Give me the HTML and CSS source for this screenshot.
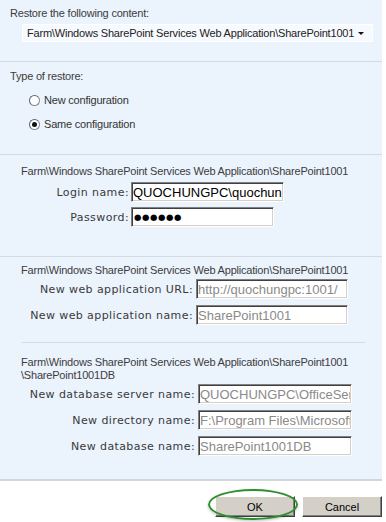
FILE: index.html
```html
<!DOCTYPE html>
<html lang="en">
<head>
  <meta charset="UTF-8" />
  <title>Restore Options</title>
  <link rel="stylesheet" href="styles.css">
</head>
<body>

  <main class="panel">
    <section class="block block-content">
      <div class="caption">Restore the following content:</div>
      <div class="select">
        <span>Farm\Windows SharePoint Services Web Application\SharePoint1001</span>
        <span class="arrow"></span>
      </div>
    </section>

    <section class="block block-type">
      <div class="caption">Type of restore:</div>
      <label class="radio"><span class="circle"></span>New configuration</label>
      <label class="radio"><span class="circle checked"></span>Same configuration</label>
    </section>

    <section class="block block-login">
      <div class="path">Farm\Windows SharePoint Services Web Application\SharePoint1001</div>
      <div class="fields fields-login">
        <span class="label">Login name:</span>
        <input class="box box-login" type="text" value="QUOCHUNGPC\quochung" />
        <span class="label">Password:</span>
        <div class="box box-pass">●●●●●●</div>
      </div>
    </section>

    <section class="block block-web">
      <div class="path">Farm\Windows SharePoint Services Web Application\SharePoint1001</div>
      <div class="fields fields-web">
        <span class="label">New web application URL:</span>
        <input class="box" type="text" value="http://quochungpc:1001/" disabled />
        <span class="label">New web application name:</span>
        <input class="box" type="text" value="SharePoint1001" disabled />
      </div>
    </section>

    <section class="block block-db">
      <div class="path">Farm\Windows SharePoint Services Web Application\SharePoint1001<br>\SharePoint1001DB</div>
      <div class="fields fields-db">
        <span class="label">New database server name:</span>
        <input class="box" type="text" value="QUOCHUNGPC\OfficeServers" disabled />
        <span class="label">New directory name:</span>
        <input class="box" type="text" value="F:\Program Files\Microsoft Office Servers" disabled />
        <span class="label">New database name:</span>
        <input class="box" type="text" value="SharePoint1001DB" disabled />
      </div>
    </section>
  </main>

  <div class="actions">
    <div class="ok-wrap">
      <button class="btn">OK</button>
      <span class="ring"></span>
    </div>
    <button class="btn">Cancel</button>
  </div>

</body>
</html>
```

FILE: styles.css
```css
:root {
  --fondo: #ebf3fd;
  --linea: #d6dbe2;
  --texto: #3c3c3c;
}

* {
  box-sizing: border-box;
}

body {
  margin: 0;
  background: #fff;
  font-family: 'Liberation Sans', Arial, sans-serif;
  font-size: 11px;
  letter-spacing: -0.2px;
  color: var(--texto);
  width: 386px;
  height: 522px;
  overflow: hidden;
}

.panel {
  width: 382px;
  height: 481px;
  background: var(--fondo);
  border-bottom: 2px solid #d3d6db;
}

.block {
  border-bottom: 1px solid var(--linea);
}

.caption {
  padding-left: 10px;
}

/* Restore the following content */
.block-content {
  height: 62px;
  padding-top: 7px;
}

.select {
  margin: 5px 0 0 22px;
  width: 351px;
  height: 18px;
  border: 1px solid #fff;
  background: #f6f9fe;
  display: flex;
  align-items: center;
  justify-content: space-between;
  padding: 0 8px 0 4px;
  color: #222;
  white-space: nowrap;
}

.arrow {
  width: 0;
  height: 0;
  border-left: 3px solid transparent;
  border-right: 3px solid transparent;
  border-top: 3px solid #111;
}

/* Type of restore */
.block-type {
  height: 93px;
  padding-top: 8px;
}

.block-type .caption {
  margin-bottom: 6px;
}

.radio {
  display: flex;
  align-items: center;
  gap: 4px;
  margin-left: 29px;
  height: 24px;
  color: #333;
}

.circle {
  width: 11px;
  height: 11px;
  border-radius: 50%;
  border: 1px solid #7f8a96;
  border-top-color: #5e6670;
  border-left-color: #5e6670;
  background: #fff;
  display: flex;
  align-items: center;
  justify-content: center;
}

.circle.checked::after {
  content: "";
  width: 5px;
  height: 5px;
  border-radius: 50%;
  background: #111;
}

/* credential and target blocks */
.path {
  padding-left: 21px;
  line-height: 13px;
}

.fields {
  display: grid;
  align-items: center;
  row-gap: 5px;
}

.fields-login {
  grid-template-columns: 129px 153px;
  column-gap: 2px;
  margin-top: 4px;
}

.fields-web {
  grid-template-columns: 193px 152px;
  column-gap: 3px;
  row-gap: 6px;
  margin-top: 2px;
}

.fields-db {
  grid-template-columns: 195px 154px;
  column-gap: 3px;
  row-gap: 6px;
  margin-top: 2px;
}

.label {
  font-family: 'DejaVu Sans', Verdana, sans-serif;
  font-size: 11px;
  letter-spacing: 0.4px;
  text-align: right;
  color: #3a3a3a;
}

.box {
  height: 20px;
  margin: 0;
  padding: 0 1px;
  font-family: 'Liberation Sans', Arial, sans-serif;
  font-size: 13px;
  letter-spacing: 0;
  color: #000;
  background: #fff;
  border: 1px solid;
  border-color: #808080 #fff #fff #808080;
  box-shadow: inset 1px 1px 0 #404040, inset -1px -1px 0 #d4d0c8;
  outline: none;
  overflow: hidden;
  white-space: nowrap;
}

.box:disabled {
  color: #8a8a8a;
  background: #fff;
}

.box-pass {
  width: 143px;
  display: flex;
  align-items: center;
  font-family: 'DejaVu Sans', sans-serif;
  font-size: 8.5px;
  letter-spacing: 0.6px;
  padding-left: 2px;
}

.block-login {
  height: 102px;
  padding-top: 10px;
}

.block-web {
  padding-top: 7px;
  border-bottom: none;
}

.block-web::after {
  content: "";
  display: block;
  margin: 17px 0 0 22px;
  width: 343px;
  border-bottom: 1px solid var(--linea);
}

.block-db {
  border-bottom: none;
  padding-top: 13px;
}

/* buttons */
.actions {
  display: flex;
  justify-content: flex-end;
  gap: 7px;
  padding: 15px 4px 0 0;
}

.ok-wrap {
  position: relative;
}

.btn {
  width: 80px;
  height: 21px;
  font-family: 'Liberation Sans', Arial, sans-serif;
  font-size: 11px;
  color: #000;
  background: #d4d0c8;
  border: 1px solid;
  border-color: #fff #404040 #404040 #fff;
  box-shadow: inset -1px -1px 0 #808080;
  padding: 0;
}

.ring {
  position: absolute;
  left: -7px;
  top: -7px;
  width: 90px;
  height: 31px;
  border: 2px solid #2f8f2f;
  border-radius: 50%;
  box-shadow: 0 1px 3px rgba(0, 0, 0, 0.25);
  pointer-events: none;
}
```
